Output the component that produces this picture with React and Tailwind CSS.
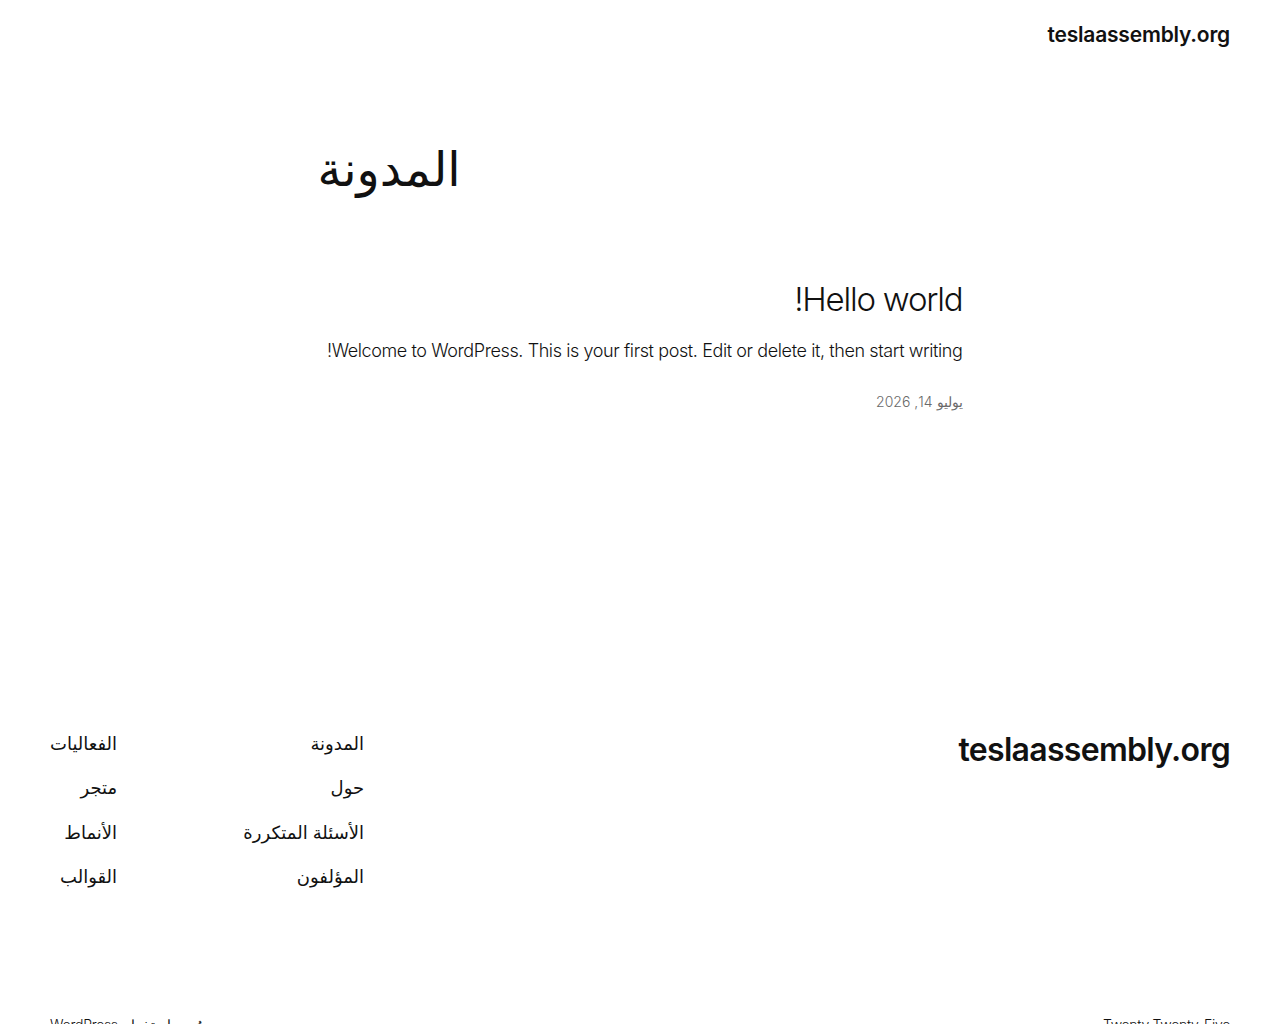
import React from "react";

const font = { fontFamily: 'Inter, "DejaVu Sans", sans-serif' };

export default function App() {
  return (
    <div dir="rtl" className="bg-white text-[#111111] min-h-[1100px]" style={font}>
      <header className="px-[50px] pt-[20px] flex justify-between items-center">
        <div className="text-[21px] font-semibold leading-[30px] tracking-[-0.2px]">teslaassembly.org</div>
      </header>

      <main className="w-[645px] mx-auto">
        <h1 className="mt-[90px] text-left text-[48px] leading-[1.2] font-normal">المدونة</h1>

        <article className="mt-[82px]">
          <h2 className="text-[33px] font-light leading-[1.2] tracking-[-1.2px]">Hello world!</h2>
          <p className="mt-[18px] text-[18px] font-light leading-[1.5] tracking-[-0.4px]">
            Welcome to WordPress. This is your first post. Edit or delete it, then start writing!
          </p>
          <div className="mt-[27px] text-[14px] text-[#6a6a6a] font-light">يوليو 14, 2026</div>
        </article>
      </main>

      <footer className="mt-[319px] px-[50px]">
        <div className="flex justify-between items-start">
          <div className="text-[32px] font-semibold leading-[1.2] tracking-[-0.7px]">teslaassembly.org</div>
          <nav className="flex text-[18px] leading-[26px]">
            <div className="w-[247px] flex flex-col gap-[18.3px]">
              <span>المدونة</span>
              <span>حول</span>
              <span>الأسئلة المتكررة</span>
              <span>المؤلفون</span>
            </div>
            <div className="flex flex-col gap-[18.3px]">
              <span>الفعاليات</span>
              <span>متجر</span>
              <span>الأنماط</span>
              <span>القوالب</span>
            </div>
          </nav>
        </div>
        <div className="mt-[124px] flex justify-between text-[14px] font-light tracking-[-0.3px]">
          <span>Twenty Twenty-Five</span>
          <span>صُمم باستخدام WordPress</span>
        </div>
      </footer>
    </div>
  );
}
